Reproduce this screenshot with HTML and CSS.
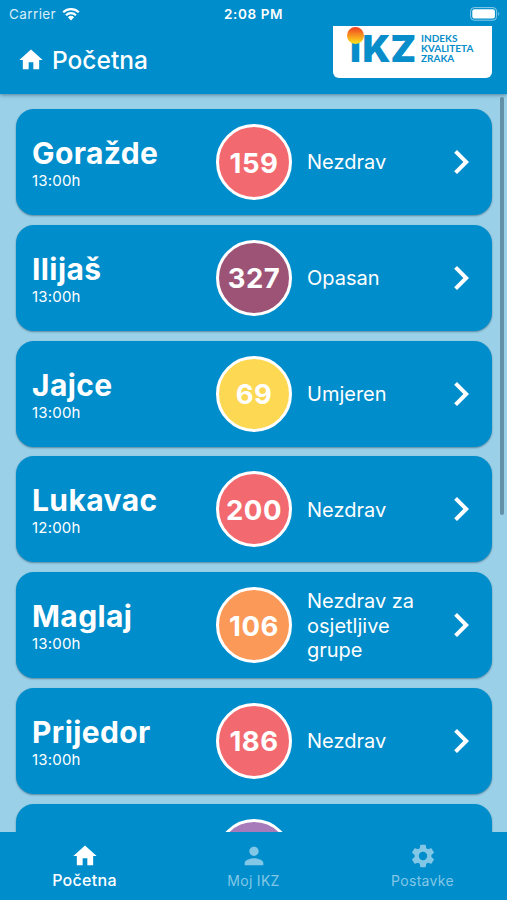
FILE: index.html
```html
<!DOCTYPE html>
<html lang="bs">
<head>
<meta charset="utf-8">
<title>Indeks kvaliteta zraka</title>
<link rel="stylesheet" href="styles.css">
</head>
<body>
<svg width="0" height="0" class="defs">
  <symbol id="home" viewBox="0 0 24 24"><path d="M10 20v-6h4v6h5v-8h3L12 3 2 12h3v8z"/></symbol>
  <symbol id="chevron" viewBox="0 0 24 24"><path d="M8.59 16.59 13.17 12 8.59 7.41 10 6l6 6-6 6z"/></symbol>
</svg>
<div class="app">
  <header class="header">
    <div class="status">
      <div class="carrier"><span>Carrier</span>
        <svg class="wifi" viewBox="0 0 18 14"><path d="M1.2 5.2a11.2 11.2 0 0 1 15.6 0M4 8.2a7.2 7.2 0 0 1 10 0" fill="none" stroke="#fff" stroke-width="2.2"/><path d="M9 13.4 5.9 10.2a4.5 4.5 0 0 1 6.2 0z" fill="#fff"/></svg>
      </div>
      <div class="clock">2:08 PM</div>
      <svg class="battery" viewBox="0 0 31 14"><rect x=".6" y=".6" width="26" height="12.6" rx="3.6" fill="none" stroke="#8dcbe8"/><rect x="2.3" y="2.3" width="22.6" height="9.2" rx="2" fill="#fff"/><path d="M28.3 4.8q2 2.1 0 4.2z" fill="#8dcbe8"/></svg>
    </div>
    <div class="bar">
      <div class="title"><svg class="home"><use href="#home"/></svg><h1>Početna</h1></div>
      <div class="logo">
        <div class="mark"><span class="stem">i</span>KZ<i class="sun"></i></div>
        <div class="words"><span>INDEKS</span><span>KVALITETA</span><span>ZRAKA</span></div>
      </div>
    </div>
  </header>
  <main class="list">
    <article class="card"><div class="place"><h2>Goražde</h2><p>13:00h</p></div><div class="index red">159</div><div class="label">Nezdrav</div><svg class="chevron"><use href="#chevron"/></svg></article>
    <article class="card"><div class="place"><h2>Ilijaš</h2><p>13:00h</p></div><div class="index plum">327</div><div class="label">Opasan</div><svg class="chevron"><use href="#chevron"/></svg></article>
    <article class="card"><div class="place"><h2>Jajce</h2><p>13:00h</p></div><div class="index yellow">69</div><div class="label">Umjeren</div><svg class="chevron"><use href="#chevron"/></svg></article>
    <article class="card"><div class="place"><h2>Lukavac</h2><p>12:00h</p></div><div class="index red">200</div><div class="label">Nezdrav</div><svg class="chevron"><use href="#chevron"/></svg></article>
    <article class="card"><div class="place"><h2>Maglaj</h2><p>13:00h</p></div><div class="index orange">106</div><div class="label">Nezdrav za osjetljive grupe</div><svg class="chevron"><use href="#chevron"/></svg></article>
    <article class="card"><div class="place"><h2>Prijedor</h2><p>13:00h</p></div><div class="index red">186</div><div class="label">Nezdrav</div><svg class="chevron"><use href="#chevron"/></svg></article>
    <article class="card"><div class="place"></div><div class="index purple"></div><div class="label"></div></article>
    <div class="scrollbar"></div>
  </main>
  <nav class="tabs">
    <a class="tab active"><svg viewBox="0 0 24 24"><use href="#home"/></svg><span>Početna</span></a>
    <a class="tab"><svg viewBox="0 0 24 24"><path d="M12 12c2.210 0 4-1.790 4-4s-1.790-4-4-4-4 1.790-4 4 1.790 4 4 4zm0 2c-2.670 0-8 1.340-8 4v2h16v-2c0-2.660-5.330-4-8-4z"/></svg><span>Moj IKZ</span></a>
    <a class="tab"><svg viewBox="0 0 24 24"><path d="M19.140 12.940c.040-.300.060-.610.060-.940 0-.320-.020-.640-.070-.940l2.030-1.580c.180-.140.230-.410.120-.610l-1.920-3.320c-.120-.220-.370-.290-.590-.220l-2.390.960c-.500-.380-1.030-.700-1.620-.940l-.360-2.540c-.040-.240-.240-.410-.480-.410h-3.840c-.240 0-.430.170-.470.410l-.360 2.540c-.590.240-1.130.570-1.620.940l-2.390-.960c-.220-.080-.470 0-.590.220L2.740 8.870c-.120.210-.080.470.120.610l2.030 1.580c-.050.300-.090.630-.090.940s.020.640.070.940l-2.030 1.580c-.180.140-.230.410-.120.610l1.920 3.320c.120.220.370.290.590.220l2.390-.960c.500.380 1.030.700 1.620.940l.360 2.540c.050.240.240.410.480.410h3.840c.240 0 .440-.170.470-.410l.360-2.540c.590-.240 1.130-.560 1.620-.940l2.390.960c.220.080.470 0 .590-.220l1.920-3.320c.120-.220.070-.470-.120-.610zM12 15.600a3.600 3.600 0 1 1 0-7.200 3.600 3.600 0 0 1 0 7.200z"/></svg><span>Postavke</span></a>
  </nav>
</div>
</body>
</html>
```

FILE: styles.css
```css
* { box-sizing: border-box; margin: 0; padding: 0; }
body { font-family: Inter, "Liberation Sans", sans-serif; color: #fff; }
.defs { position: absolute; }
.app { width: 507px; height: 900px; display: flex; flex-direction: column; overflow: hidden; background: #9bd1e8; }
.header { height: 94px; flex: none; background: #008dcb; box-shadow: 0 1px 4px rgba(0,50,80,.5); position: relative; z-index: 1; }
.status { height: 26px; display: grid; grid-template-columns: 1fr auto 1fr; align-items: center; padding: 1px 6px 0 6px; font-size: 13.500px; }
.carrier { display: flex; align-items: center; gap: 6px; letter-spacing: .4px; color: #d9eef8; padding-left: 3px; }
.wifi { width: 18px; height: 14px; }
.clock { font-weight: 600; letter-spacing: .6px; font-size: 13.500px; }
.battery { width: 31px; height: 14px; justify-self: end; }
.bar { height: 68px; display: flex; justify-content: space-between; padding: 0 15px 0 17px; }
.title { display: flex; align-items: center; gap: 7px; }
.home { width: 28px; height: 28px; fill: #fff; }
.title h1 { font-size: 24.500px; font-weight: 500; }
.logo { width: 159px; height: 52px; background: #fff; border-radius: 0 0 6px 6px; display: flex; padding: 9px 0 0 17px; color: #078dc9; }
.mark { width: 71px; font-size: 37px; line-height: 27px; font-weight: 900; position: relative; white-space: nowrap; }
.stem { margin-right: 1.500px; }
.sun { position: absolute; left: -3px; top: -8px; width: 17px; height: 17px; border-radius: 50%; background: linear-gradient(#ee3d22, #f78b1e 45%, #ffe51c); }
.words { font: 700 10px/10.200px Lato, sans-serif; margin-top: -2px; }
.words span { display: block; }
.list { flex: 1; min-height: 0; overflow: hidden; position: relative; padding: 15px 15px 0 16px; display: flex; flex-direction: column; gap: 9.800px; }
.card { height: 106px; flex: none; border-radius: 18px; background: #008dcb; box-shadow: 0 1px 2px rgba(0,45,75,.45); display: grid; grid-template-columns: 184px 76px 145px 48px; align-items: center; padding-left: 16px; }
.place h2 { font-size: 30px; line-height: 36px; font-weight: 700; letter-spacing: .4px; }
.place p { font-size: 15px; line-height: 18px; letter-spacing: .2px; position: relative; top: 1px; }
.index { width: 76px; height: 76px; border: 3px solid #fff; border-radius: 50%; display: flex; align-items: center; justify-content: center; font-size: 27.500px; font-weight: 700; letter-spacing: .5px; padding-top: 1px; }
.red { background: #f26a70; }
.plum { background: #9d5376; }
.yellow { background: #fdd853; }
.orange { background: #fb9958; }
.purple { background: #a77bb9; }
.label { padding: 1px 10px 0 15px; font-size: 20px; line-height: 24.300px; }
.chevron { width: 48px; height: 48px; fill: #fff; }
.scrollbar { position: absolute; right: 3px; top: 3px; width: 4px; height: 418px; border-radius: 2px; background: #638fa7; }
.tabs { height: 68px; flex: none; background: #008dcb; display: grid; grid-template-columns: repeat(3, 1fr); }
.tab { display: flex; flex-direction: column; align-items: center; padding-top: 10px; color: #83c7e6; font-size: 14px; letter-spacing: .3px; }
.tab svg { width: 28px; height: 28px; fill: currentColor; }
.tab span { line-height: 20px; margin-top: 1px; }
.active { color: #fff; }
.active span { font-size: 16px; font-weight: 500; margin-top: 0; letter-spacing: .3px; }
```
